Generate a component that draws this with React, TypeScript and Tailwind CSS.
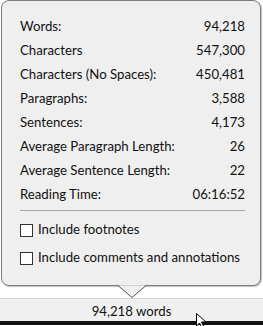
const STATS: { label: string; value: string }[] = [
  { label: 'Words:', value: '94,218' },
  { label: 'Characters', value: '547,300' },
  { label: 'Characters (No Spaces):', value: '450,481' },
  { label: 'Paragraphs:', value: '3,588' },
  { label: 'Sentences:', value: '4,173' },
  { label: 'Average Paragraph Length:', value: '26' },
  { label: 'Average Sentence Length:', value: '22' },
  { label: 'Reading Time:', value: '06:16:52' },
]

function Check({ label }: { label: string }) {
  return (
    <label className="flex items-center gap-[5px] h-[28px] whitespace-nowrap">
      <span className="w-[13px] h-[13px] border border-[#333] bg-white shrink-0" />
      <span>{label}</span>
    </label>
  )
}

export default function App() {
  return (
    <div
      className="relative w-[263px] h-[326px] bg-white overflow-hidden text-[13.2px] text-[#111]"
      style={{ fontFamily: 'Lato, "Noto Sans", sans-serif' }}
    >
      {/* Popup */}
      <div className="ml-[1px] w-[260px] h-[286px] bg-[#efefef] border border-[#7d7d7d] rounded-[8px] shadow-[1px_1px_1px_rgba(0,0,0,0.25)] pl-[18px] pr-[15px] pt-[14px]">
        <div className="flex flex-col">
          {STATS.map(s => (
            <div key={s.label} className="flex justify-between items-center h-[24px] whitespace-nowrap">
              <span>{s.label}</span>
              <span>{s.value}</span>
            </div>
          ))}
        </div>
        <div className="h-px bg-[#a8a8a8] mt-[3px] mb-[5px]" />
        <Check label="Include footnotes" />
        <Check label="Include comments and annotations" />
      </div>

      {/* Pointer notch */}
      <svg className="absolute left-[118px] top-[284px]" width="28" height="15" viewBox="0 0 28 15">
        <path d="M0 1.5 L14 13.5 L28 1.5" fill="#efefef" stroke="#555" strokeWidth="1" />
        <rect x="1.5" y="0" width="25" height="1.5" fill="#efefef" />
      </svg>

      {/* Status bar */}
      <div className="mt-[12px] border-t border-[#d6d6d6] bg-[#f0f0f0] h-[23px] pt-[3px] flex items-center justify-center">
        94,218 words
      </div>
      <div className="h-[4px] bg-[#111]" />

      {/* Mouse cursor */}
      <svg className="absolute left-[196px] top-[313px]" width="12" height="16" viewBox="0 0 12 16">
        <path d="M0.5 0.5 L0.5 13 L3.5 10 L6 15 L8 14 L5.5 9 L10 9 Z" fill="#fff" stroke="#000" strokeWidth="1" />
      </svg>
    </div>
  )
}
